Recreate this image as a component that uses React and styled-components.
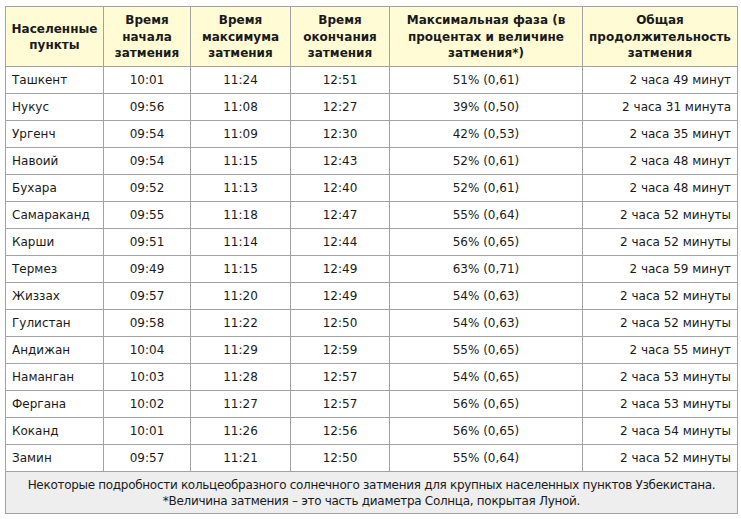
import React from 'react'
import styled, { createGlobalStyle } from 'styled-components'

const GlobalStyle = createGlobalStyle`
  body {
    margin: 0;
    padding: 6px 5px;
    background: #fff;
    font-family: "DejaVu Sans", Verdana, sans-serif;
  }
`

const Table = styled.table`
  border-collapse: collapse;
  table-layout: fixed;
  width: 732px;
  font-size: 12px;
  color: #1a1a1a;
`

const Head = styled.th`
  background: #fffbd4;
  border: 1px solid #a2a2a2;
  font-weight: bold;
  text-align: center;
  vertical-align: middle;
  line-height: 16.5px;
  height: 58px;
  padding: 1px 5px 0;
`

const Cell = styled.td`
  border: 1px solid #a2a2a2;
  height: 26px;
  padding: 0 6px;
  text-align: ${p => p.$align || 'center'};
  white-space: nowrap;
`

const Caption = styled.td`
  background: #eeeeee;
  border: 1px solid #a2a2a2;
  text-align: center;
  vertical-align: middle;
  line-height: 16px;
  letter-spacing: -0.3px;
  padding: 0 6px;
  height: 41px;
`

const rows = [
  ['Ташкент', '10:01', '11:24', '12:51', '51% (0,61)', '2 часа 49 минут'],
  ['Нукус', '09:56', '11:08', '12:27', '39% (0,50)', '2 часа 31 минута'],
  ['Ургенч', '09:54', '11:09', '12:30', '42% (0,53)', '2 часа 35 минут'],
  ['Навоий', '09:54', '11:15', '12:43', '52% (0,61)', '2 часа 48 минут'],
  ['Бухара', '09:52', '11:13', '12:40', '52% (0,61)', '2 часа 48 минут'],
  ['Самараканд', '09:55', '11:18', '12:47', '55% (0,64)', '2 часа 52 минуты'],
  ['Карши', '09:51', '11:14', '12:44', '56% (0,65)', '2 часа 52 минуты'],
  ['Термез', '09:49', '11:15', '12:49', '63% (0,71)', '2 часа 59 минут'],
  ['Жиззах', '09:57', '11:20', '12:49', '54% (0,63)', '2 часа 52 минуты'],
  ['Гулистан', '09:58', '11:22', '12:50', '54% (0,63)', '2 часа 52 минуты'],
  ['Андижан', '10:04', '11:29', '12:59', '55% (0,65)', '2 часа 55 минут'],
  ['Наманган', '10:03', '11:28', '12:57', '54% (0,65)', '2 часа 53 минуты'],
  ['Фергана', '10:02', '11:27', '12:57', '56% (0,65)', '2 часа 53 минуты'],
  ['Коканд', '10:01', '11:26', '12:56', '56% (0,65)', '2 часа 54 минуты'],
  ['Замин', '09:57', '11:21', '12:50', '55% (0,64)', '2 часа 52 минуты'],
]

const widths = [98, 87, 100, 99, 193, 155]

export default function App() {
  return (
    <>
      <GlobalStyle />
      <Table>
        <colgroup>
          {widths.map((w, i) => <col key={i} style={{ width: w }} />)}
        </colgroup>
        <thead>
          <tr>
            <Head>Населенные пункты</Head>
            <Head>Время начала затмения</Head>
            <Head>Время максимума затмения</Head>
            <Head>Время окончания затмения</Head>
            <Head>Максимальная фаза (в процентах и величине затмения*)</Head>
            <Head>Общая продолжительность затмения</Head>
          </tr>
        </thead>
        <tbody>
          {rows.map((r, i) => (
            <tr key={i}>
              <Cell $align="left">{r[0]}</Cell>
              <Cell>{r[1]}</Cell>
              <Cell>{r[2]}</Cell>
              <Cell>{r[3]}</Cell>
              <Cell>{r[4]}</Cell>
              <Cell $align="right">{r[5]}</Cell>
            </tr>
          ))}
          <tr>
            <Caption colSpan={6}>
              Некоторые подробности кольцеобразного солнечного затмения для крупных населенных пунктов Узбекистана.
              <br />
              *Величина затмения – это часть диаметра Солнца, покрытая Луной.
            </Caption>
          </tr>
        </tbody>
      </Table>
    </>
  )
}
